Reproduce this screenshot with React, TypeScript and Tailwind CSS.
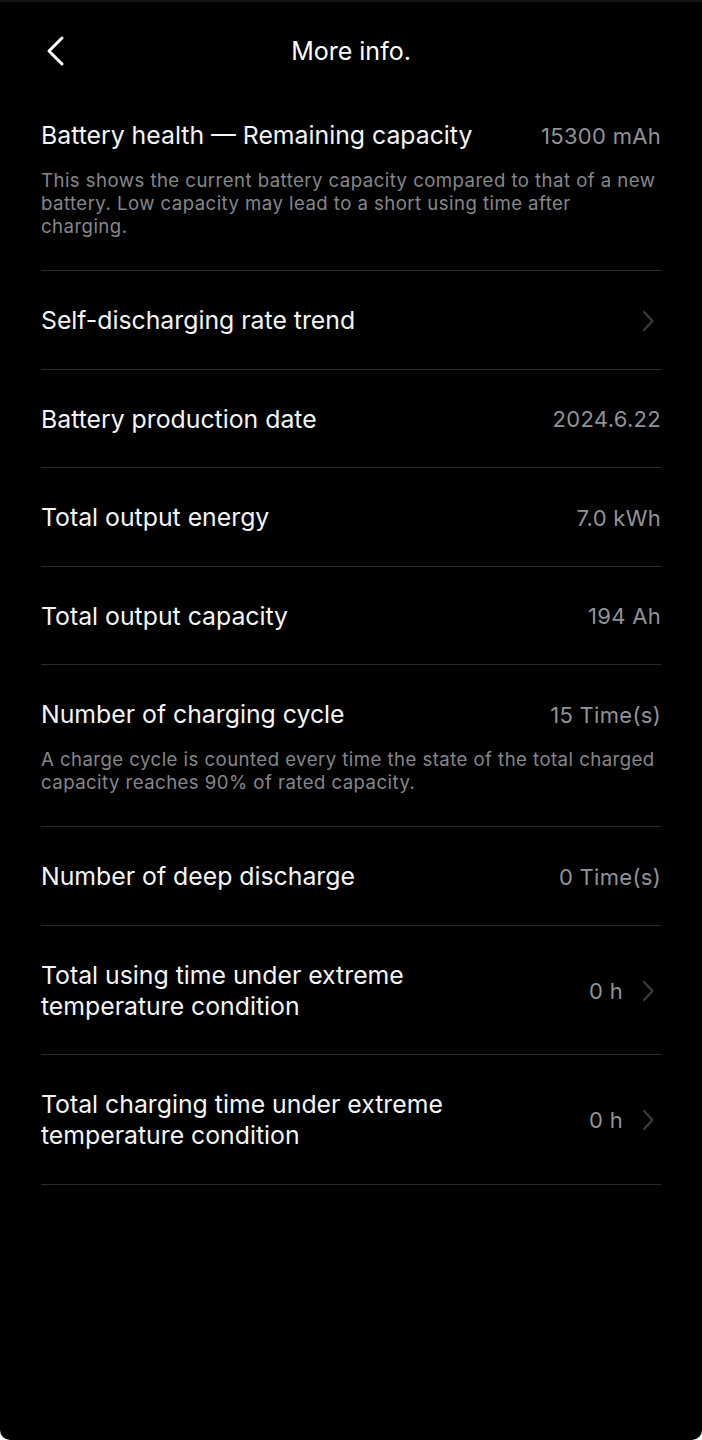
type Row = {
  title: string;
  value?: string;
  desc?: string;
  arrow?: boolean;
};

const rows: Row[] = [
  {
    title: 'Battery health — Remaining capacity',
    value: '15300 mAh',
    desc: 'This shows the current battery capacity compared to that of a new battery. Low capacity may lead to a short using time after charging.',
  },
  { title: 'Self-discharging rate trend', arrow: true },
  { title: 'Battery production date', value: '2024.6.22' },
  { title: 'Total output energy', value: '7.0 kWh' },
  { title: 'Total output capacity', value: '194 Ah' },
  {
    title: 'Number of charging cycle',
    value: '15 Time(s)',
    desc: 'A charge cycle is counted every time the state of the total charged capacity reaches 90% of rated capacity.',
  },
  { title: 'Number of deep discharge', value: '0 Time(s)' },
  { title: 'Total using time under extreme temperature condition', value: '0 h', arrow: true },
  { title: 'Total charging time under extreme temperature condition', value: '0 h', arrow: true },
];

const Chevron = () => (
  <svg width="14" height="22" viewBox="0 0 14 22" fill="none" className="mr-[6px] shrink-0">
    <path d="M3 2l8.5 9L3 20" stroke="#3a3a3c" strokeWidth="2.4" strokeLinecap="round" strokeLinejoin="round" />
  </svg>
);

const InfoRow = ({ row }: { row: Row }) => {
  return (
    <div className={`border-b border-[#2a2a2c] pt-[34px] ${row.desc ? 'pb-[32px]' : 'pb-[32.5px]'}`}>
      <div className="flex items-center justify-between gap-6">
        <div className="max-w-[440px] text-[24.8px] leading-[31px] text-[#f4f4f4]">{row.title}</div>
        <div className="flex shrink-0 items-center gap-[18px]">
          {row.value && (
            <span className="text-[22px] leading-[30px] tracking-[0.3px] text-[#929297]">{row.value}</span>
          )}
          {row.arrow && <Chevron />}
        </div>
      </div>
      {row.desc && (
        <p className="mt-[18px] text-[18.6px] leading-[23px] tracking-[0.45px] text-[#86868b]">{row.desc}</p>
      )}
    </div>
  );
};

export default function App() {
  return (
    <div className="bg-white">
      <div
        className="min-h-[1440px] overflow-hidden rounded-b-[10px] border-t-2 border-[#151515] bg-black"
        style={{ fontFamily: 'Inter, "Noto Sans", sans-serif' }}
      >
        {/* Header */}
        <div className="relative flex h-[98px] items-center justify-center pt-[2px]">
          <svg
            width="22"
            height="32"
            viewBox="0 0 22 32"
            fill="none"
            className="absolute left-[44px] top-[33px]"
          >
            <path d="M18 3L5 16l13 13" stroke="white" strokeWidth="3" strokeLinecap="round" strokeLinejoin="round" />
          </svg>
          <h1 className="text-[25px] font-normal text-white">More info.</h1>
        </div>

        {/* List */}
        <div className="mx-[41px] [&>div:first-child]:pt-[20px]">
          {rows.map((row) => (
            <InfoRow key={row.title} row={row} />
          ))}
        </div>
      </div>
    </div>
  );
}
